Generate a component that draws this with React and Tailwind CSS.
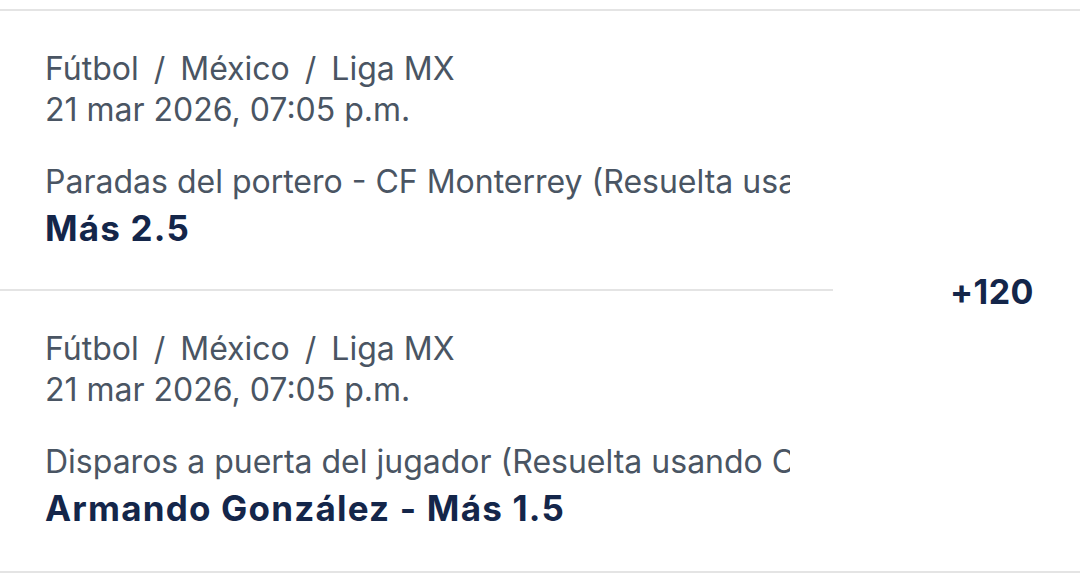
import React from 'react'

const BETS = [
  {
    path: ['Fútbol', 'México', 'Liga MX'],
    date: '21 mar 2026, 07:05 p.m.',
    market: 'Paradas del portero - CF Monterrey (Resuelta usando Opta)',
    pick: 'Más 2.5',
  },
  {
    path: ['Fútbol', 'México', 'Liga MX'],
    date: '21 mar 2026, 07:05 p.m.',
    market: 'Disparos a puerta del jugador (Resuelta usando Opta)',
    pick: 'Armando González - Más 1.5',
  },
]

function Leg({ bet, last }) {
  return (
    <div className={`h-[280px] pl-[45px] pr-[43px] pt-[37px] overflow-hidden ${last ? '' : 'border-b-2 border-[#e4e4e4]'}`}>
      <div className="text-[32px] leading-[41px] text-[#4a5563] whitespace-nowrap">
        {bet.path.map((p, i) => (
          <span key={i}>
            {i > 0 && <span className="mx-[15px]">/</span>}
            {p}
          </span>
        ))}
      </div>
      <div className="text-[32px] leading-[41px] text-[#4a5563] whitespace-nowrap">{bet.date}</div>
      <div className="mt-[31px] text-[32px] leading-[41px] text-[#4a5563] whitespace-nowrap overflow-hidden">{bet.market}</div>
      <div className="mt-[6px] text-[35px] leading-[41px] font-bold tracking-[1.2px] text-[#14264a] whitespace-nowrap">{bet.pick}</div>
    </div>
  )
}

export default function App() {
  return (
    <div className="w-[1080px] h-[575px] bg-white pt-[9px] font-['Inter',sans-serif]">
      <div className="flex border-y-2 border-[#e4e4e4]">
        <div className="w-[833px] shrink-0">
          {BETS.map((b, i) => <Leg key={i} bet={b} last={i === BETS.length - 1} />)}
        </div>
        <div className="flex-1 flex items-center justify-end pr-[46px]">
          <span className="text-[34px] font-bold tracking-[0.5px] text-[#14264a]">+120</span>
        </div>
      </div>
    </div>
  )
}
